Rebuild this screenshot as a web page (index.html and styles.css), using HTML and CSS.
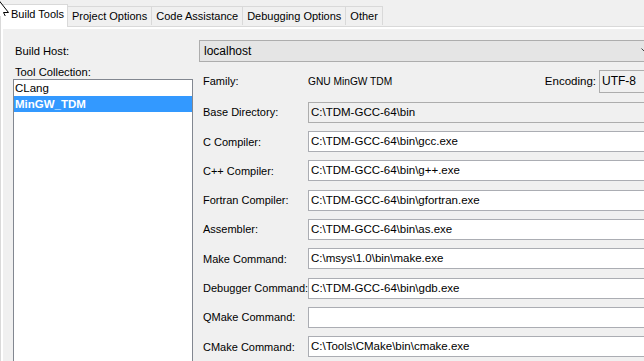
FILE: index.html
```html
<!DOCTYPE html>
<html lang="en">
<head>
  <meta charset="UTF-8">
  <title>Project Properties - Build Tools</title>
  <link rel="stylesheet" href="styles.css">
</head>
<body>
  <div class="page">
    <!-- Abas -->
    <ul class="tabs">
      <li class="tab active">Build Tools</li>
      <li class="tab">Project Options</li>
      <li class="tab">Code Assistance</li>
      <li class="tab">Debugging Options</li>
      <li class="tab">Other</li>
    </ul>

    <div class="tab-page">
      <div class="panel">
        <div class="host-row">
          <label class="left-label">Build Host:</label>
          <div class="combo">
            <span>localhost</span>
            <svg class="chevron" width="9" height="6" viewBox="0 0 9 6"><path d="M0.5 0.5 L4.5 4.5 L8.5 0.5" fill="none" stroke="#444" stroke-width="1"/></svg>
          </div>
        </div>

        <div class="main-row">
          <div class="left-col">
            <label class="left-label">Tool Collection:</label>
            <ul class="listbox">
              <li>CLang</li>
              <li class="selected">MinGW_TDM</li>
            </ul>
          </div>

          <div class="right-col">
            <div class="family-row">
              <span class="lbl">Family:</span>
              <span class="family-value">GNU MinGW TDM</span>
              <span class="enc-lbl">Encoding:</span>
              <div class="field readonly enc">UTF-8</div>
            </div>

            <div class="tool-row first">
              <span class="lbl">Base Directory:</span>
              <div class="field readonly">C:\TDM-GCC-64\bin</div>
            </div>
            <div class="tool-row">
              <span class="lbl">C Compiler:</span>
              <div class="field">C:\TDM-GCC-64\bin\gcc.exe</div>
            </div>
            <div class="tool-row">
              <span class="lbl">C++ Compiler:</span>
              <div class="field">C:\TDM-GCC-64\bin\g++.exe</div>
            </div>
            <div class="tool-row">
              <span class="lbl">Fortran Compiler:</span>
              <div class="field">C:\TDM-GCC-64\bin\gfortran.exe</div>
            </div>
            <div class="tool-row">
              <span class="lbl">Assembler:</span>
              <div class="field">C:\TDM-GCC-64\bin\as.exe</div>
            </div>
            <div class="tool-row">
              <span class="lbl">Make Command:</span>
              <div class="field">C:\msys\1.0\bin\make.exe</div>
            </div>
            <div class="tool-row">
              <span class="lbl">Debugger Command:</span>
              <div class="field">C:\TDM-GCC-64\bin\gdb.exe</div>
            </div>
            <div class="tool-row">
              <span class="lbl">QMake Command:</span>
              <div class="field"></div>
            </div>
            <div class="tool-row">
              <span class="lbl">CMake Command:</span>
              <div class="field">C:\Tools\CMake\bin\cmake.exe</div>
            </div>
          </div>
        </div>
      </div>
    </div>
  </div>

  <!-- Cursor do mouse -->
  <svg class="cursor" width="12" height="16" viewBox="0 0 12 16">
    <path d="M-3 -2 L8.5 12.5 L3.5 12.5 L5.5 16.5 L-3 16.5 Z" fill="#fff" stroke="#000" stroke-width="1"/>
  </svg>
</body>
</html>
```

FILE: styles.css
```css
/* Geral */
* {
  margin: 0;
  padding: 0;
  box-sizing: border-box;
}

html, body {
  width: 644px;
  height: 361px;
  overflow: hidden;
}

body {
  font-family: 'Liberation Sans', Arial, sans-serif;
  font-size: 11px;
  color: #000;
  background: #f0f0f0;
  position: relative;
}

.page {
  width: 656px;
}

/* Abas */
.tabs {
  display: flex;
  list-style: none;
  height: 26px;
  align-items: flex-end;
  padding-left: 1px;
  font-size: 11px;
}

.tab {
  height: 19px;
  line-height: 18px;
  padding: 0 4px;
  border: 1px solid #d9d9d9;
  border-bottom: none;
  margin-left: -1px;
  background: #f0f0f0;
  margin-bottom: 1px;
}

.tab.active {
  height: 23px;
  line-height: 19px;
  background: #fff;
  margin-bottom: -1px;
  padding: 0 3px 0 10px;
  position: relative;
  z-index: 1;
}

/* Página da aba */
.tab-page {
  border-top: 1px solid #d9d9d9;
  border-left: 1px solid #d9d9d9;
  background: #fff;
  padding: 2px 0 0 2px;
  height: 340px;
}

.panel {
  background: #f0f0f0;
  height: 100%;
  padding: 11px 0 0 10px;
}

/* Linha do host */
.host-row {
  display: flex;
  align-items: center;
}

.left-label {
  display: block;
  width: 186px;
  padding-left: 2px;
  font-size: 11.2px;
}

.combo {
  flex: 1;
  height: 22px;
  border: 1px solid #adadad;
  background: #e5e5e5;
  display: flex;
  align-items: center;
  justify-content: space-between;
  padding: 0 5px 0 4px;
  font-size: 12px;
}

.chevron {
  display: block;
}

/* Linha principal */
.main-row {
  display: flex;
  gap: 6px;
}

.left-col {
  width: 180px;
  padding-top: 3px;
}

.left-col .left-label {
  height: 14px;
  line-height: 14px;
}

.listbox {
  list-style: none;
  background: #fff;
  border: 1px solid #828790;
  height: 290px;
  font-size: 11.5px;
}

.listbox li {
  height: 16px;
  line-height: 16px;
  padding-left: 1px;
}

.listbox li.selected {
  background: #3399ff;
  color: #fff;
  font-weight: bold;
}

.right-col {
  flex: 1;
  padding-top: 8px;
  display: flex;
  flex-direction: column;
  gap: 7.3px;
}

.family-row,
.tool-row {
  display: flex;
  align-items: center;
  height: 22px;
}

.tool-row.first {
  margin-top: 2px;
}

.lbl {
  flex: 0 0 109px;
  padding-left: 4px;
  white-space: nowrap;
}

.family-value {
  flex: 1;
  font-size: 10.2px;
}

.enc-lbl {
  margin-right: 3px;
  font-size: 11.5px;
}

.field {
  flex: 1;
  height: 21px;
  line-height: 19px;
  border: 1px solid #abadb3;
  background: #fff;
  padding-left: 2px;
  font-size: 11.5px;
  white-space: nowrap;
}

.field.readonly {
  background: #f0f0f0;
  border-color: #adadad;
}

.field.enc {
  flex: 0 0 57px;
  height: 23px;
  line-height: 21px;
  font-size: 12px;
}

/* Cursor */
.cursor {
  position: absolute;
  left: 0;
  top: 0;
  z-index: 5;
}
```
